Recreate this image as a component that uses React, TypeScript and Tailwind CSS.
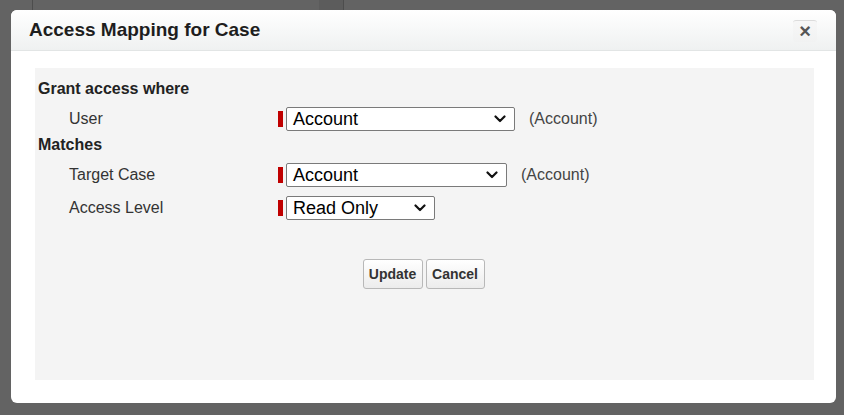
import React from "react";

const font = { fontFamily: '"Liberation Sans", Arial, sans-serif' };

function Chevron() {
  return (
    <svg width="12" height="8" viewBox="0 0 12 8" className="shrink-0">
      <path d="M1.5 1.5 L6 6 L10.5 1.5" fill="none" stroke="#111" strokeWidth="2.2" strokeLinecap="round" strokeLinejoin="round" />
    </svg>
  );
}

function Picklist({ value, width, note }: { value: string; width: string; note?: string }) {
  return (
    <div className="flex items-center">
      <div className="w-[5px] h-[16px] bg-[#c00000] mr-[3px]" />
      <div
        className={`${width} h-[24px] bg-white border border-[#7a7a7a] rounded-[2px] flex items-center justify-between pl-[6px] pr-[8px]`}
      >
        <span className="text-[18px] leading-none text-black">{value}</span>
        <Chevron />
      </div>
      {note && <span className="ml-[14px] text-[16px] text-[#444]">{note}</span>}
    </div>
  );
}

function Row({ label, children, className }: { label: string; children: React.ReactNode; className: string }) {
  return (
    <div className={`flex items-center h-[24px] ${className}`}>
      <div className="w-[240px] pl-[31px] text-[16px] text-[#333]">{label}</div>
      {children}
    </div>
  );
}

export default function App() {
  return (
    <div className="w-[844px] h-[415px] bg-[#636363] overflow-hidden" style={font}>
      <div className="h-[10px] flex">
        <div className="w-[32px]" />
        <div className="w-[1px] bg-[#4d4d4d]" />
        <div className="w-[286px]" />
        <div className="w-[24px] bg-[#5c5c5c]" />
        <div className="w-[1px] bg-[#4d4d4d]" />
      </div>
      <div className="ml-[11px] w-[825px] h-[393px] bg-white rounded-[6px] flex flex-col overflow-hidden">
        <div className="h-[41px] shrink-0 flex items-center justify-between pl-[18px] pr-[19px] pt-[1px] bg-gradient-to-b from-white to-[#eff1f1] border-b border-[#e2e5e5]">
          <h2 className="text-[19px] font-bold text-[#1e1e1e]">Access Mapping for Case</h2>
          <div className="w-[24px] h-[22px] flex items-center justify-center border-t border-[#dcdcdc] rounded-[3px] bg-gradient-to-b from-[#f7f7f7] to-[#f1f2f2]">
            <span className="text-[20px] font-bold text-[#555] leading-none">×</span>
          </div>
        </div>
        <div className="flex-1 pt-[17px] pl-[24px] pr-[22px] pb-[23px]">
          <div className="h-full bg-[#f4f4f4] pl-[3px] pt-[11px]">
            <div className="h-[20px] flex items-center text-[16px] font-bold text-[#222]">Grant access where</div>
            <Row label="User" className="mt-[8px]">
              <Picklist value="Account" width="w-[229px]" note="(Account)" />
            </Row>
            <div className="mt-[4px] h-[20px] flex items-center text-[16px] font-bold text-[#222]">Matches</div>
            <Row label="Target Case" className="mt-[8px]">
              <Picklist value="Account" width="w-[221px]" note="(Account)" />
            </Row>
            <Row label="Access Level" className="mt-[9px]">
              <Picklist value="Read Only" width="w-[149px]" />
            </Row>
            <div className="mt-[39px] flex justify-center gap-[3px] pr-[5px]">
              <button className="h-[30px] w-[60px] rounded-[3px] border border-[#b8b8b8] bg-gradient-to-b from-white to-[#ececec] text-[14px] font-bold text-[#333]">
                Update
              </button>
              <button className="h-[30px] w-[59px] rounded-[3px] border border-[#b8b8b8] bg-gradient-to-b from-white to-[#ececec] text-[14px] font-bold text-[#333]">
                Cancel
              </button>
            </div>
          </div>
        </div>
      </div>
    </div>
  );
}
